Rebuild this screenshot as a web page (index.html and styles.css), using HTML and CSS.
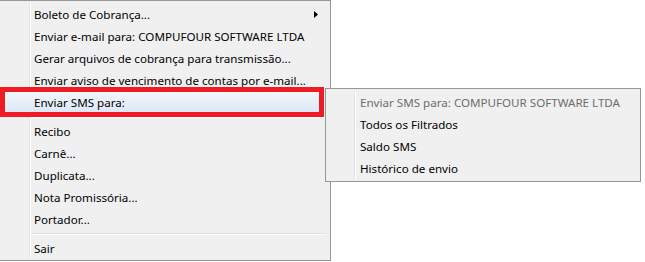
FILE: index.html
```html
<!DOCTYPE html>
<html lang="pt-BR">
<head>
    <meta charset="UTF-8">
    <title>Menu de cobrança</title>
    <link rel="stylesheet" href="styles.css">
</head>
<body>
    <div class="screen">
        <!-- menu principal -->
        <div class="menu main-menu">
            <div class="item has-sub">Boleto de Cobrança...
                <svg class="arrow" viewBox="0 0 4 7" width="4" height="7"><path d="M0 0L4 3.5L0 7Z" fill="#000"/></svg>
            </div>
            <div class="item">Enviar e-mail para: COMPUFOUR SOFTWARE LTDA</div>
            <div class="item">Gerar arquivos de cobrança para transmissão...</div>
            <div class="item">Enviar aviso de vencimento de contas por e-mail...</div>
            <div class="item hover">Enviar SMS para:</div>
            <div class="separator"></div>
            <div class="item">Recibo</div>
            <div class="item">Carnê...</div>
            <div class="item">Duplicata...</div>
            <div class="item">Nota Promissória...</div>
            <div class="item">Portador...</div>
            <div class="separator"></div>
            <div class="item">Sair</div>
        </div>

        <!-- destaque vermelho -->
        <div class="mark"></div>

        <!-- submenu SMS -->
        <div class="menu sub-menu">
            <div class="item disabled">Enviar SMS para: COMPUFOUR SOFTWARE LTDA</div>
            <div class="item">Todos os Filtrados</div>
            <div class="item">Saldo SMS</div>
            <div class="item">Histórico de envio</div>
        </div>
    </div>
</body>
</html>
```

FILE: styles.css
```css
body {
    margin: 0;
    padding: 0;
    background: #fff;
    font-family: "Noto Sans", "Liberation Sans", sans-serif;
    font-size: 11.6px;
    color: #000;
}

.screen {
    position: relative;
    width: 645px;
    height: 262px;
}

.menu {
    background: #f0f0f0;
    border: 1px solid #979797;
    padding: 2px;
    box-sizing: border-box;
    position: relative;
}

.main-menu {
    width: 331px;
    height: 261px;
    border-left: none;
    padding-left: 3px;
}

.menu::before {
    content: '';
    position: absolute;
    top: 2px;
    bottom: 2px;
    width: 1px;
    background: #e2e3e3;
    border-right: 1px solid #fff;
}

.main-menu::before {
    left: 29px;
}

.sub-menu::before {
    left: 28px;
}

.item {
    height: 22px;
    line-height: 23px;
    padding-left: 31px;
    white-space: nowrap;
    position: relative;
}

.sub-menu .item {
    padding-left: 32px;
}

.item.disabled {
    color: #6d6d6d;
}

.item.hover {
    margin-right: 8px;
    background: linear-gradient(#f2f6fb, #dde8f5);
    border: 1px solid #fff;
    border-radius: 3px;
    box-sizing: border-box;
    line-height: 21px;
    padding-left: 30px;
}

.arrow {
    position: absolute;
    right: 10px;
    top: 8px;
}

.separator {
    height: 7px;
    margin-left: 29px;
    position: relative;
}

.separator::after {
    content: '';
    position: absolute;
    left: 0;
    right: 2px;
    top: 3px;
    height: 1px;
    background: #e0e0e0;
    border-bottom: 1px solid #fff;
}

.sub-menu {
    position: absolute;
    left: 325px;
    top: 88px;
    width: 316px;
    height: 94px;
}

.mark {
    position: absolute;
    left: 0;
    top: 87px;
    width: 324px;
    height: 30px;
    border: 5px solid #ed1c24;
    box-sizing: border-box;
}
```
